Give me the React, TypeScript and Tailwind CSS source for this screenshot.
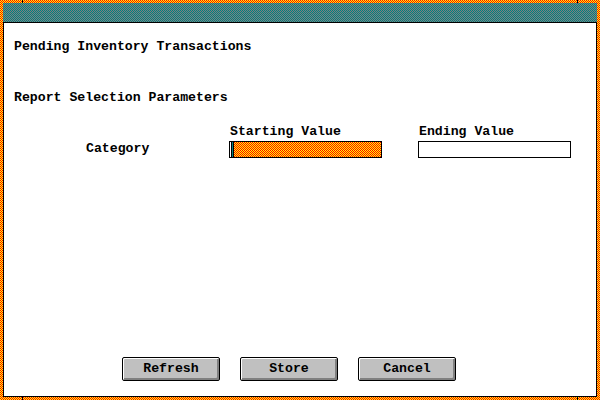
import React from 'react';

const mono = "font-['Liberation_Mono',monospace] font-bold text-[13.2px] leading-[16px] text-black";

// 1px checker dithers as tiny svg tiles
const ditherRed =
  'bg-[url(data:image/svg+xml,%3Csvg%20xmlns=%27http://www.w3.org/2000/svg%27%20width=%272%27%20height=%272%27%20shape-rendering=%27crispEdges%27%3E%3Crect%20width=%272%27%20height=%272%27%20fill=%27%23ffff00%27/%3E%3Cpath%20d=%27M0%200h1v1H0zM1%201h1v1H1z%27%20fill=%27%23ff0000%27/%3E%3C/svg%3E)] bg-repeat';
const ditherTeal =
  'bg-[url(data:image/svg+xml,%3Csvg%20xmlns=%27http://www.w3.org/2000/svg%27%20width=%272%27%20height=%272%27%20shape-rendering=%27crispEdges%27%3E%3Crect%20width=%272%27%20height=%272%27%20fill=%27%23808080%27/%3E%3Cpath%20d=%27M0%200h1v1H0zM1%201h1v1H1z%27%20fill=%27%23008080%27/%3E%3C/svg%3E)] bg-repeat';

const DialogButton = ({ label }: { label: string }) => (
  <button className="w-[98px] h-[24px] rounded-[2px] border border-black bg-[#c0c0c0] shadow-[inset_1px_1px_0_#ffffff,inset_-2px_-2px_0_#808080] flex items-center justify-center">
    <span className={mono}>{label}</span>
  </button>
);

const App = () => {
  return (
    <div className={`relative w-[600px] h-[400px] p-[3px] ${ditherRed}`}>
      {/* frame ticks */}
      <span className="absolute left-[22px] top-0 w-px h-[3px] bg-black" />
      <span className="absolute left-[577px] top-0 w-px h-[3px] bg-black" />
      <span className="absolute left-[22px] bottom-0 w-px h-[3px] bg-black" />
      <span className="absolute left-[577px] bottom-0 w-px h-[3px] bg-black" />

      <div className="flex flex-col h-full">
        <div className={`h-[20px] shrink-0 border-b border-black ${ditherTeal}`} />
        <div className="flex-1 flex flex-col bg-white border-x border-b border-black">
          <div className={`${mono} mt-[16px] pl-[10px]`}>Pending Inventory Transactions</div>
          <div className={`${mono} mt-[35px] pl-[10px]`}>Report Selection Parameters</div>

          <div className="flex mt-[18px]">
            <div className="w-[225px] pl-[82px] pt-[17px]">
              <div className={mono}>Category</div>
            </div>
            <div className="w-[153px]">
              <div className={`${mono} pl-[1px]`}>Starting Value</div>
              <div className={`mt-[1px] h-[17px] border border-black flex ${ditherRed}`}>
                <div className="w-[1px] bg-white" />
                <div className="w-[1px] bg-black" />
                <div className="w-[1px] bg-[#008080]" />
                <div className="w-[1px] bg-black" />
              </div>
            </div>
            <div className="w-[153px] ml-[36px]">
              <div className={`${mono} pl-[1px]`}>Ending Value</div>
              <div className="mt-[1px] h-[17px] border border-black bg-white" />
            </div>
          </div>

          <div className="flex-1" />
          <div className="flex gap-[20px] pl-[118px] mb-[15px]">
            <DialogButton label="Refresh" />
            <DialogButton label="Store" />
            <DialogButton label="Cancel" />
          </div>
        </div>
      </div>
    </div>
  );
};

export default App;
